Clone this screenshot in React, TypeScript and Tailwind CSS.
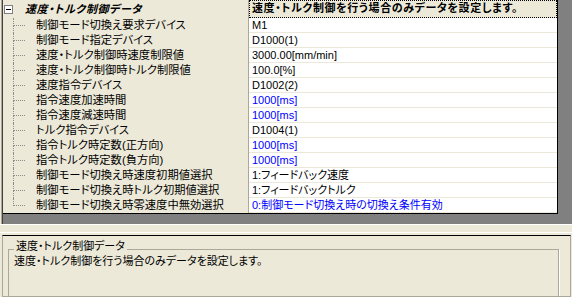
import React from "react";

type Row = { label: string; value: string; blue?: boolean };

const rows: Row[] = [
  { label: "制御モード切換え要求デバイス", value: "M1" },
  { label: "制御モード指定デバイス", value: "D1000(1)" },
  { label: "速度・トルク制御時速度制限値", value: "3000.00[mm/min]" },
  { label: "速度・トルク制御時トルク制限値", value: "100.0[%]" },
  { label: "速度指令デバイス", value: "D1002(2)" },
  { label: "指令速度加速時間", value: "1000[ms]", blue: true },
  { label: "指令速度減速時間", value: "1000[ms]", blue: true },
  { label: "トルク指令デバイス", value: "D1004(1)" },
  { label: "指令トルク時定数(正方向)", value: "1000[ms]", blue: true },
  { label: "指令トルク時定数(負方向)", value: "1000[ms]", blue: true },
  { label: "制御モード切換え時速度初期値選択", value: "1:フィードバック速度" },
  { label: "制御モード切換え時トルク初期値選択", value: "1:フィードバックトルク" },
  {
    label: "制御モード切換え時零速度中無効選択",
    value: "0:制御モード切換え時の切換え条件有効",
    blue: true,
  },
];

const PropRow: React.FC<{ row: Row; last: boolean }> = ({ row, last }) => (
  <div className="flex h-[15px]">
    <div className="flex w-[246px] overflow-hidden border-r border-[#aca899] bg-[#ece9d8]">
      {/* tree lines */}
      <div className="ml-[10px] flex w-[12px] shrink-0 flex-col">
        <div className="h-[8px] border-b border-l border-dotted border-[#8c8c8c]" />
        {!last && <div className="flex-1 border-l border-dotted border-[#8c8c8c]" />}
      </div>
      <span className="ml-[11px] whitespace-nowrap text-[11.3px] leading-[15px]">{row.label}</span>
    </div>
    <div
      className={`w-[308px] overflow-hidden whitespace-nowrap border-b border-[#ebe8d9] bg-white pl-[3px] leading-[14px] ${
        row.blue ? "text-[#0000ff]" : "text-black"
      }`}
    >
      {row.value}
    </div>
  </div>
);

const App: React.FC = () => {
  return (
    <div className="flex h-[297px] w-[572px] flex-col overflow-hidden bg-[#ece9d8] font-['Liberation_Sans','Noto_Sans_CJK_JP',sans-serif] text-[11px] text-black [font-feature-settings:'palt']">
      {/* property grid pane */}
      <div className="ml-[1px] flex h-[224px] shrink-0 border-l border-[#aca899]">
        <div className="flex-1 border-l border-[#404040] bg-[#808080]">
          <div className="w-[555px] border-b border-r border-black">
            <div className="flex h-[18px]">
              <div className="flex w-[246px] items-center border-r border-[#aca899] bg-[#ece9d8]">
                <div className="ml-[1px] flex h-[9px] w-[9px] items-center justify-center border border-[#808080] bg-white">
                  <div className="h-px w-[5px] bg-black" />
                </div>
                <span className="ml-[12px] font-bold italic leading-[15px] tracking-[0.6px]">
                  速度・トルク制御データ
                </span>
              </div>
              <div className="w-[308px] overflow-hidden whitespace-nowrap border border-dotted border-black bg-[#ece9d8] pl-[2px] font-bold leading-[15px] tracking-[0.6px]">
                速度・トルク制御を行う場合のみデータを設定します。
              </div>
            </div>
            {rows.map((r, i) => (
              <PropRow key={r.label} row={r} last={i === rows.length - 1} />
            ))}
          </div>
        </div>
      </div>

      {/* splitter */}
      <div className="h-[11px] shrink-0 border-t border-white">
        <div className="mt-[7px] h-px bg-white" />
      </div>

      {/* description pane */}
      <div className="ml-[2px] h-[62px] w-[569px] shrink-0 overflow-hidden border border-[#aca899] border-t-black">
        <div className="relative ml-[5px] mt-[13px] h-[56px] w-[551px] border border-[#aca899] shadow-[1px_1px_0_#ffffff]">
          <span className="absolute -top-[11px] left-[5px] bg-[#ece9d8] px-[2px] leading-[15px]">
            速度・トルク制御データ
          </span>
          <div className="pl-[5px] pt-[4px] leading-[15px]">
            速度・トルク制御を行う場合のみデータを設定します。
          </div>
        </div>
      </div>
    </div>
  );
};

export default App;
